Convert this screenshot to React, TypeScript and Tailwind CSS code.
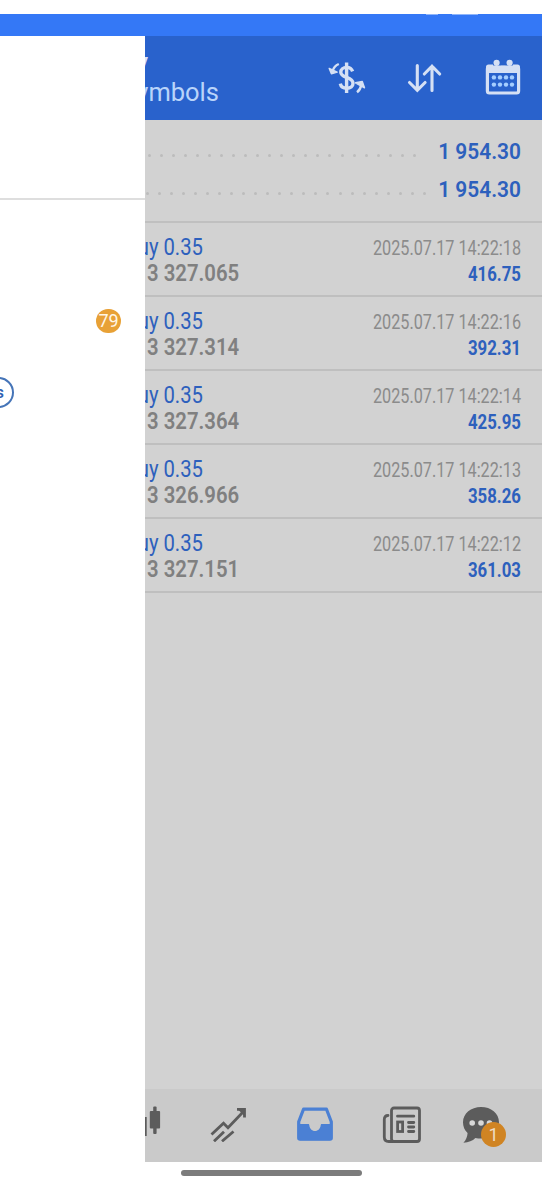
import React from "react";

const totals = [
    { value: "1 954.30", dots: 23, className: "ml-[3px] w-[268px]" },
    { value: "1 954.30", dots: 24, className: "ml-px w-[280px]" },
];

const deals = [
    { price: "3 327.065", time: "2025.07.17 14:22:18", profit: "416.75" },
    { price: "3 327.314", time: "2025.07.17 14:22:16", profit: "392.31" },
    { price: "3 327.364", time: "2025.07.17 14:22:14", profit: "425.95" },
    { price: "3 326.966", time: "2025.07.17 14:22:13", profit: "358.26" },
    { price: "3 327.151", time: "2025.07.17 14:22:12", profit: "361.03" },
];

function CurrencyIcon() {
    return (
        <svg className="h-9 w-10" viewBox="0 0 40 36" fill="none" stroke="currentColor" strokeWidth="2.4">
            <path d="M26.6 11.4C25.7 8.8 23.6 7.4 20.6 7.4c-3.4 0-5.8 1.9-5.8 4.8 0 6.2 12.2 4.2 12.2 11 0 3.1-2.5 5-6.2 5-3.6 0-5.9-1.7-6.500-4.6" strokeWidth="3.4" />
            <path d="M20.6 2.5v30.500" strokeWidth="3.4" />
            <path d="M12.8 4C9.5 5.4 7.6 7.5 6.6 11" />
            <path d="M3.2 8.5l8 3.7-5.8 1.6z" fill="currentColor" strokeWidth="1.4" strokeLinejoin="round" />
            <path d="M31 32.3c2.4-1.8 3.8-4.3 4.4-7.8" />
            <path d="M29.500 22.8l6.8-1.4 2.2 6.4z" fill="currentColor" strokeWidth="1.4" strokeLinejoin="round" />
        </svg>
    );
}

function SortIcon() {
    return (
        <svg className="h-9 w-9" viewBox="0 0 36 36" fill="none" stroke="currentColor" strokeWidth="3.1" strokeLinecap="round">
            <path d="M11.3 5.5v24.5M3.5 22.5l7.8 7.8 7.8-7.8" />
            <path d="M26 30.5V6M18.3 14l7.7-7.8 7.7 7.8" />
        </svg>
    );
}

function CalendarIcon() {
    return (
        <svg className="h-9 w-9" viewBox="0 0 36 36">
            <rect x="2.4" y="8" width="31.2" height="26" rx="2" fill="none" stroke="currentColor" strokeWidth="3.2" />
            <path d="M1 14V8q0-2.5 2.5-2.5H8q0 3.4 3.8 3.4T16 6.8h4.5q.6 2.1 4 2.1T28 5.5h4.5Q35 5.5 35 8v6z" fill="currentColor" />
            <circle cx="11.6" cy="3.8" r="3.1" fill="currentColor" />
            <circle cx="24.6" cy="3.8" r="3.1" fill="currentColor" />
            {[8.9, 15, 21, 27].map((x) => (
                <g key={x} fill="#a5ceff">
                    <circle cx={x} cy="18.4" r="2.2" />
                    <circle cx={x} cy="25.6" r="2.2" />
                </g>
            ))}
        </svg>
    );
}

function CandlesIcon() {
    return (
        <svg className="h-8 w-4" viewBox="0 0 16 32" fill="currentColor">
            <rect x="0" y="12" width="1.7" height="19" />
            <rect x="8.2" y="1.5" width="3.4" height="27.5" rx="1" />
            <rect x="4.8" y="6" width="10.3" height="17.5" rx="1" />
        </svg>
    );
}

function TrendIcon() {
    return (
        <svg className="h-9 w-10" viewBox="0 0 40 36" fill="none" stroke="currentColor" strokeWidth="2.8">
            <path d="M2.5 28.5L14.5 17.2l4.5 4.5L34.5 5.5" />
            <path d="M28 3.4h7.5v8" />
            <path d="M28.5 3h7.5v7.5z" fill="currentColor" strokeWidth="0" />
            <path d="M5 35.3l10-9.6M13 35.3l11.5-9.8" />
        </svg>
    );
}

function InboxIcon() {
    return (
        <svg className="h-9 w-[38px]" viewBox="0 0 38 36">
            <path d="M7.5 3.2h23l4.8 12.5V32q0 1.2-1.2 1.2H3.9Q2.7 33.2 2.7 32V15.7z" fill="none" stroke="currentColor" strokeWidth="3.2" strokeLinejoin="round" />
            <path d="M2 18h10.3c.6 0 .9.5 1 1.2.4 3.3 2.6 5.8 5.7 5.8s5.3-2.500 5.7-5.8c.1-.7.4-1.2 1-1.2H36v14q0 2.2-2.2 2.2H4.2Q2 34.2 2 32z" fill="currentColor" />
        </svg>
    );
}

function NewsIcon() {
    return (
        <svg className="h-[38px] w-10" viewBox="0 0 40 38" fill="none" stroke="currentColor" strokeWidth="2.8" strokeLinecap="round">
            <rect x="9.5" y="2" width="28" height="33.5" rx="2.5" />
            <path d="M6 9.5q-3.7 0-3.7 4V31q0 4.5 4.5 4.5h4" />
            <path d="M15.5 10.2h16.3M26.5 16.5h5.3M26.5 21h5.3M26.5 25.5h5.3" />
            <rect x="15.6" y="16" width="5" height="9.5" />
        </svg>
    );
}

function ChatIcon() {
    return (
        <svg className="h-[38px] w-[38px]" viewBox="0 0 38 38">
            <path d="M19 1C9 1 1 7.6 1 16.2c0 4.3 1.5 7.8 4.6 10.8-.3 4-1.6 7-4.2 9.8 5.4-.4 9-2.1 12-4.9 1.9.4 3.7.5 5.6.5 10 0 18-7.2 18-16.2S29 1 19 1z" fill="currentColor" />
            <g fill="#d8d8d8">
                <circle cx="10.2" cy="17" r="2.8" />
                <circle cx="19" cy="17" r="2.8" />
                <circle cx="27.5" cy="17" r="2.8" />
            </g>
        </svg>
    );
}

function Drawer() {
    return (
        <aside className="w-[145px] shrink-0 overflow-hidden bg-white">
            <div className="h-[164px] border-b-2 border-[#dedede]" />
            <div className="mt-[109px] flex justify-end pr-6">
                <span className="flex h-6 w-[25px] items-center justify-center rounded-full bg-[#e8a136] text-[18px] leading-none text-[#fff6e6]">79</span>
            </div>
            <div className="mt-[44px] flex w-[14px] justify-end">
                <span className="flex h-[31px] shrink-0 items-center rounded-full border-2 border-[#4675b8] px-2 pt-px text-[17px] font-medium text-[#2f62b4]">Ads</span>
            </div>
        </aside>
    );
}

function Header() {
    return (
        <header className="flex h-[84px] items-start justify-between bg-[#2962cc] pr-[21px]">
            <div className="flex w-[74px] flex-col items-end overflow-hidden whitespace-nowrap">
                <div className="mr-[71px] mt-[12px] text-[24px] font-medium leading-[29px] text-[#dce6f8]">History</div>
                <div className="text-[25.5px] leading-[30px] text-[#b9d4fa]">All symbols</div>
            </div>
            <div className="flex text-[#d5e0f4]">
                <div className="mt-[24px]"><CurrencyIcon /></div>
                <div className="ml-[40px] mt-[24px]"><SortIcon /></div>
                <div className="ml-[43px] mt-[23px]"><CalendarIcon /></div>
            </div>
        </header>
    );
}

function Totals() {
    return (
        <div className="h-[103px] border-b-2 border-[#c0c0c0] pr-[21px] pt-[13px]">
            {totals.map((total, idx) => (
                <div key={idx} className="flex h-[37.5px] items-center justify-between">
                    <div className={`mt-[8px] flex justify-between ${total.className}`}>
                        {Array.from({ length: total.dots }, (_, i) => (
                            <span key={i} className="h-[3px] w-[3px] rounded-full bg-[#bcbcbc]" />
                        ))}
                    </div>
                    <span className="flex w-[80px] origin-right scale-x-[0.95] justify-end whitespace-nowrap text-[22px] font-semibold text-[#2d60bd]">
                        {total.value}
                    </span>
                </div>
            ))}
        </div>
    );
}

function DealRow({ deal }: { deal: typeof deals[0] }) {
    return (
        <div className="flex h-[74px] justify-between border-b-2 border-[#bfbfbf] pr-[21px] pt-[11px] whitespace-nowrap">
            <div className="w-[110px] overflow-hidden">
                <div className="flex w-[58px] justify-end">
                    <span className="origin-right scale-x-[0.86] text-[23.5px] leading-[26px] text-[#2d60bd]">buy 0.35</span>
                </div>
                <div className="ml-[2px] origin-left scale-x-[0.865] text-[23.5px] font-semibold leading-[26px] text-[#808080]">{deal.price}</div>
            </div>
            <div className="flex flex-col items-end">
                <span className="mt-px origin-right scale-x-[0.832] text-[19.5px] leading-[28px] text-[#8b8b8b]">{deal.time}</span>
                <span className="origin-right scale-x-[0.87] text-[19.3px] font-bold leading-[23px] text-[#2d60bd]">{deal.profit}</span>
            </div>
        </div>
    );
}

function BottomNav() {
    return (
        <nav className="flex h-[73px] items-start bg-[#cacaca] pt-[16px] text-[#5c5c5c]">
            <CandlesIcon />
            <div className="ml-[48px] mt-px"><TrendIcon /></div>
            <div className="ml-[47px] mt-px text-[#4b80d4]"><InboxIcon /></div>
            <div className="ml-[48px] mt-px"><NewsIcon /></div>
            <div className="relative ml-[40px] mt-px">
                <ChatIcon />
                <span className="absolute left-[19px] top-[16px] flex h-[25px] w-[25px] items-center justify-center rounded-full bg-[#d08423] text-[18px] leading-none text-[#eedcc4]">1</span>
            </div>
        </nav>
    );
}

export default function App() {
    return (
        <div className="flex h-[1200px] w-[542px] flex-col overflow-hidden bg-white font-['Roboto',sans-serif]">
            <div className="mt-[14px] flex h-[22px] shrink-0 justify-end gap-[14px] bg-[#3478f6] pr-[64px]">
                <span className="h-px w-3 bg-[#8fb5fa]" />
                <span className="h-px w-[26px] bg-[#8fb5fa]" />
            </div>
            <div className="flex h-[1126px] shrink-0">
                <Drawer />
                <main className="flex min-w-0 flex-1 flex-col bg-[#d2d2d2]">
                    <Header />
                    <Totals />
                    <div className="flex-1">
                        {deals.map((deal) => (
                            <DealRow key={deal.time} deal={deal} />
                        ))}
                    </div>
                    <BottomNav />
                </main>
            </div>
            <div className="flex justify-center pt-2">
                <div className="h-[6px] w-[181px] rounded-full bg-[#7c7c7c]" />
            </div>
        </div>
    );
}
